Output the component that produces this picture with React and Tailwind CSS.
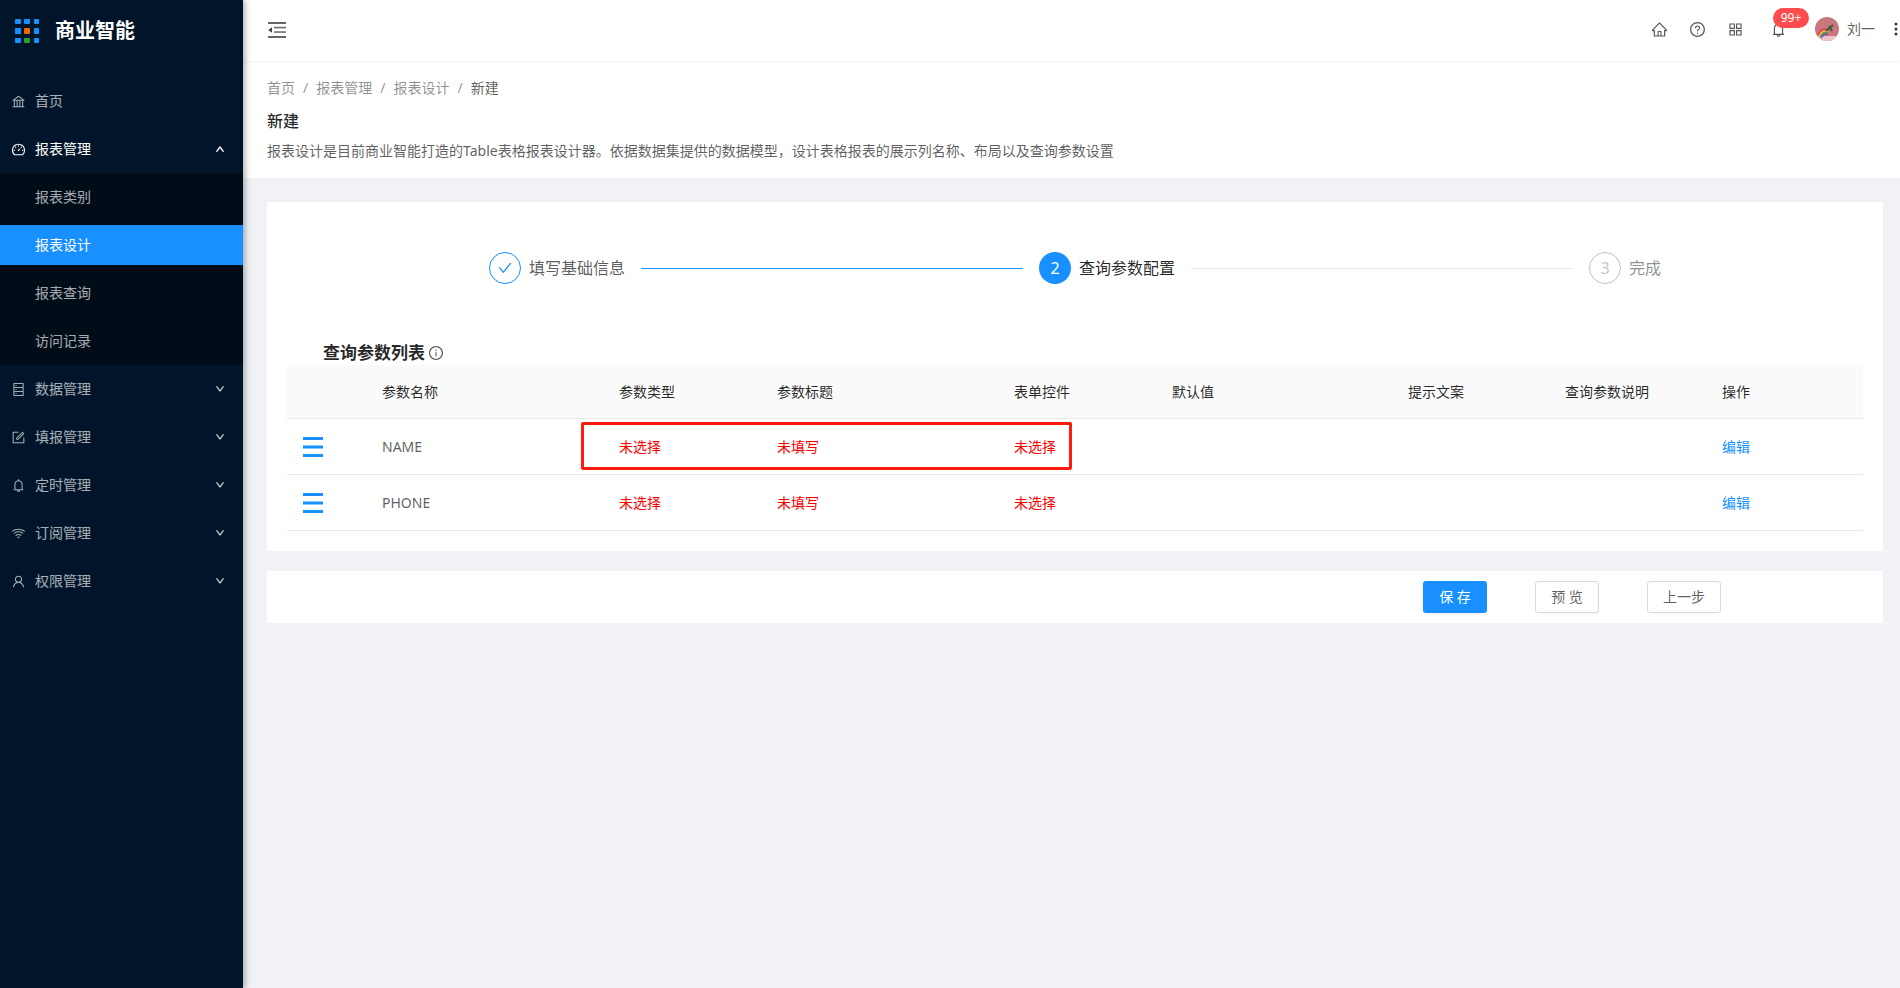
import React from "react";
import {
  AiOutlineBank, AiOutlineDashboard, AiOutlineDatabase, AiOutlineForm, AiOutlineBell, AiOutlineWifi,
  AiOutlineUser, AiOutlineHome, AiOutlineQuestionCircle, AiOutlineAppstore, AiOutlineInfoCircle,
  AiOutlineCheck, AiOutlineMore, AiOutlineUp, AiOutlineDown,
} from "react-icons/ai";

const font = { fontFamily: '"Noto Sans","Noto Sans CJK SC",sans-serif' };

function MenuItem({ icon: Icon, label, open, chevron = true }) {
  return (
    <div className={`flex h-10 items-center pl-[11px] pr-[18px] text-sm ${open ? "text-white" : "text-white/65"}`}>
      <Icon className="mr-[9px] text-[15px] shrink-0" />
      <span className="flex-1">{label}</span>
      {chevron && (open ? <AiOutlineUp className="text-[10px] stroke-[80]" /> : <AiOutlineDown className="text-[10px] stroke-[80]" />)}
    </div>
  );
}

function Sidebar() {
  const colors = ["#1890ff", "#1890ff", "#1890ff", "#1890ff", "#f56a00", "#1890ff", "#1890ff", "#2ca02c", "#1890ff"];
  return (
    <aside className="relative z-10 flex w-[243px] shrink-0 flex-col bg-[#001529] shadow-[2px_0_6px_rgba(0,21,41,0.35)]">
      <div className="flex h-[62px] items-center pl-[15px]">
        <div className="grid w-6 grid-cols-3 gap-[4px]">
          {colors.map((c, i) => (
            <span key={i} className="h-[5.5px] w-[5.5px] rounded-[1px]" style={{ background: c }} />
          ))}
        </div>
        <span className="ml-4 text-[20px] font-bold leading-none text-white">商业智能</span>
      </div>
      <div className="mt-[19px] flex flex-col gap-2">
        <MenuItem icon={AiOutlineBank} label="首页" chevron={false} />
        <MenuItem icon={AiOutlineDashboard} label="报表管理" open />
      </div>
      <div className="my-1 flex flex-col gap-2 bg-[#000c17] py-1 text-sm">
        <div className="flex h-10 items-center pl-[35px] text-white/65">报表类别</div>
        <div className="flex h-10 items-center bg-[#1890ff] pl-[35px] text-white">报表设计</div>
        <div className="flex h-10 items-center pl-[35px] text-white/65">报表查询</div>
        <div className="flex h-10 items-center pl-[35px] text-white/65">访问记录</div>
      </div>
      <div className="flex flex-col gap-2">
        <MenuItem icon={AiOutlineDatabase} label="数据管理" />
        <MenuItem icon={AiOutlineForm} label="填报管理" />
        <MenuItem icon={AiOutlineBell} label="定时管理" />
        <MenuItem icon={AiOutlineWifi} label="订阅管理" />
        <MenuItem icon={AiOutlineUser} label="权限管理" />
      </div>
    </aside>
  );
}

function Avatar() {
  return (
    <svg width="24" height="24" viewBox="0 0 24 24" className="block shrink-0">
      <defs>
        <clipPath id="av"><circle cx="12" cy="12" r="12" /></clipPath>
      </defs>
      <g clipPath="url(#av)">
        <rect width="24" height="24" fill="#c9777f" />
        <rect y="19" width="24" height="5" fill="#e8c4c8" />
        <path d="M3 18 Q7 10 13 13" fill="none" stroke="#e8332a" strokeWidth="1.3" />
        <path d="M4 19 Q8 12 13 14.5" fill="none" stroke="#f3d02f" strokeWidth="1.3" />
        <path d="M5 20 Q9 14 13 16" fill="none" stroke="#3fa34d" strokeWidth="1.3" />
        <path d="M6 21 Q10 16 13 17.5" fill="none" stroke="#7b3fb5" strokeWidth="1.3" />
        <path d="M11 14 L18 8 M14 9 L17 14" stroke="#3c5a34" strokeWidth="2" />
      </g>
    </svg>
  );
}

function FoldIcon() {
  return (
    <svg width="18" height="16" viewBox="0 0 18 16" fill="#666" className="block">
      <rect x="0" y="0" width="18" height="2" />
      <rect x="6" y="4.8" width="12" height="1.5" />
      <rect x="6" y="9.3" width="12" height="1.5" />
      <rect x="0" y="14" width="18" height="2" />
      <path d="M0.2 8 L4 5.2 V10.8 Z" fill="#444" />
    </svg>
  );
}

function Header() {
  return (
    <header className="relative z-[1] flex h-[61px] items-center bg-white pb-px pl-[25px] shadow-[0_1px_3px_rgba(0,21,41,0.06)]">
      <FoldIcon />
      <div className="ml-auto flex items-center pb-[2px] text-[#555]">
        <AiOutlineHome className="text-[17px]" />
        <AiOutlineQuestionCircle className="ml-[21px] text-[17px]" />
        <AiOutlineAppstore className="ml-[21px] text-[17px]" />
        <span className="relative ml-[26px] block">
          <AiOutlineBell className="text-[17px]" />
          <span className="absolute left-[3px] top-[-13px] flex h-5 w-9 items-center justify-center rounded-[10px] bg-[#ff4d4f] text-xs text-white">99+</span>
        </span>
        <span className="ml-[28px]"><Avatar /></span>
        <span className="ml-2 text-sm text-[rgba(0,0,0,0.65)]">刘一</span>
        <AiOutlineMore className="ml-[12px] mr-[-5px] text-[18px] stroke-[60] text-[#333]" />
      </div>
    </header>
  );
}

function Steps() {
  return (
    <div className="ml-[222px] flex items-center pt-[50px]">
      <span className="flex h-8 w-8 items-center justify-center rounded-full border border-[#1890ff] text-[#1890ff]">
        <AiOutlineCheck className="text-[16px]" />
      </span>
      <span className="ml-2 w-24 text-base leading-8 text-[rgba(0,0,0,0.65)]">填写基础信息</span>
      <span className="mx-4 h-px w-[382px] bg-[#1890ff]" />
      <span className="flex h-8 w-8 items-center justify-center rounded-full bg-[#1890ff] text-base text-white">2</span>
      <span className="ml-2 w-24 text-base leading-8 text-[rgba(0,0,0,0.85)]">查询参数配置</span>
      <span className="mx-4 h-px w-[382px] bg-[#e8e8e8]" />
      <span className="flex h-8 w-8 items-center justify-center rounded-full border border-[rgba(0,0,0,0.25)] text-base text-[rgba(0,0,0,0.25)]">3</span>
      <span className="ml-2 text-base leading-8 text-[rgba(0,0,0,0.45)]">完成</span>
    </div>
  );
}

function DragIcon() {
  return (
    <svg width="20" height="20" viewBox="0 0 20 20" className="ml-4 block translate-y-[1px]">
      <rect x="0" y="0" width="20" height="3" fill="#1890ff" />
      <rect x="0" y="8.5" width="20" height="3" fill="#1890ff" />
      <rect x="0" y="17" width="20" height="3" fill="#1890ff" />
    </svg>
  );
}

function ParamTable() {
  const widths = [79, 237, 158, 237, 158, 236, 157, 157, 157];
  const heads = ["", "参数名称", "参数类型", "参数标题", "表单控件", "默认值", "提示文案", "查询参数说明", "操作"];
  const rows = ["NAME", "PHONE"];
  return (
    <div className="relative mx-5">
      <table className="w-full table-fixed border-collapse text-sm">
        <colgroup>
          {widths.map((w, i) => <col key={i} style={{ width: w }} />)}
        </colgroup>
        <thead>
          <tr className="h-[53px] border-b border-[#e8e8e8] bg-[#fafafa]">
            {heads.map((h, i) => (
              <th key={i} className="px-4 pt-[2px] text-left font-normal text-[rgba(0,0,0,0.85)]">{h}</th>
            ))}
          </tr>
        </thead>
        <tbody>
          {rows.map((r) => (
            <tr key={r} className="h-14 border-b border-[#e8e8e8] text-[rgba(0,0,0,0.65)]">
              <td className="p-0"><DragIcon /></td>
              <td className="px-4 pt-[2px]">{r}</td>
              <td className="px-4 pt-[2px] text-[#ff0000]">未选择</td>
              <td className="px-4 pt-[2px] text-[#ff0000]">未填写</td>
              <td className="px-4 pt-[2px] text-[#ff0000]">未选择</td>
              <td className="px-4" />
              <td className="px-4" />
              <td className="px-4" />
              <td className="px-4 pt-[2px] text-[#1890ff]">编辑</td>
            </tr>
          ))}
        </tbody>
      </table>
      <div className="absolute left-[294px] top-[57px] h-12 w-[491px] rounded-[2px] border-[3px] border-[#ff1a0d]" />
    </div>
  );
}

export default function App() {
  return (
    <div className="flex h-[988px] w-full overflow-hidden bg-[#f0f2f5]" style={font}>
      <Sidebar />
      <main className="flex min-w-0 flex-1 flex-col">
        <Header />
        <section className="h-[117px] bg-white pl-6 pt-[15px]">
          <div className="flex text-sm leading-[24px] text-[rgba(0,0,0,0.45)]">
            <span>首页</span><span className="mx-2">/</span>
            <span>报表管理</span><span className="mx-2">/</span>
            <span>报表设计</span><span className="mx-2">/</span>
            <span className="text-[rgba(0,0,0,0.65)]">新建</span>
          </div>
          <h1 className="mt-[9px] text-base font-medium leading-[24px] text-[rgba(0,0,0,0.85)]">新建</h1>
          <p className="mt-[6px] text-sm leading-[24px] text-[rgba(0,0,0,0.65)]">
            报表设计是目前商业智能打造的Table表格报表设计器。依据数据集提供的数据模型，设计表格报表的展示列名称、布局以及查询参数设置
          </p>
        </section>
        <div className="mt-6 ml-6 mr-[17px] flex flex-col gap-5">
          <div className="h-[349px] bg-white">
            <Steps />
            <div className="ml-14 mt-[57px] flex h-6 items-center">
              <span className="text-[17px] font-bold text-[rgba(0,0,0,0.85)]">查询参数列表</span>
              <AiOutlineInfoCircle className="ml-[3px] text-[16px] text-[#555]" />
            </div>
            <ParamTable />
          </div>
          <div className="flex h-[52px] items-center justify-end bg-white pr-[162px] text-sm">
            <button className="h-8 w-16 rounded-[3px] bg-[#1890ff] text-white shadow-[0_2px_0_rgba(0,0,0,0.04)]">保 存</button>
            <button className="ml-12 h-8 w-16 rounded-[3px] border border-[#d9d9d9] bg-white text-[rgba(0,0,0,0.65)] shadow-[0_2px_0_rgba(0,0,0,0.02)]">预 览</button>
            <button className="ml-12 h-8 w-[74px] rounded-[3px] border border-[#d9d9d9] bg-white text-[rgba(0,0,0,0.65)] shadow-[0_2px_0_rgba(0,0,0,0.02)]">上一步</button>
          </div>
        </div>
      </main>
    </div>
  );
}
